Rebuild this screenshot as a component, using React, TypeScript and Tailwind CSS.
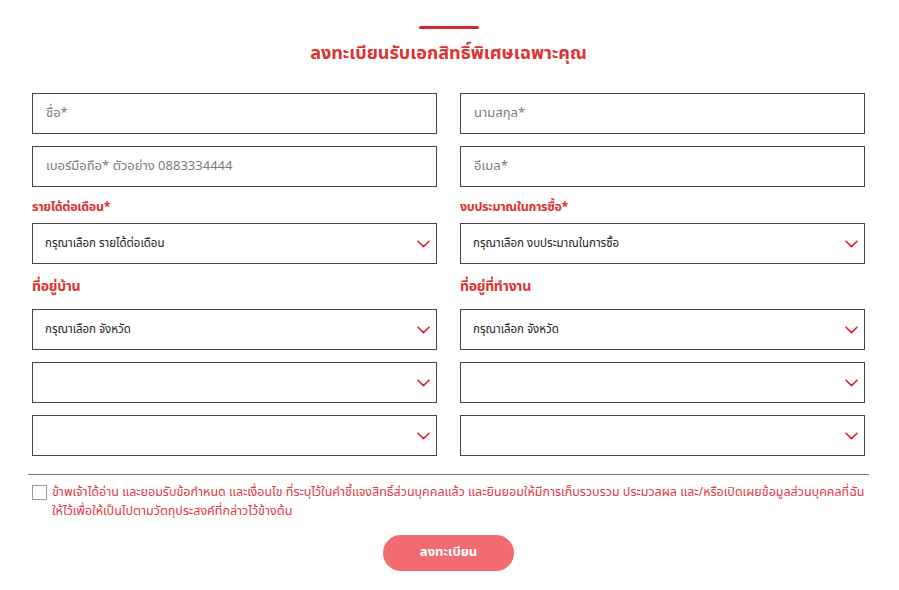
const font = { fontFamily: '"Noto Sans Thai", "Noto Sans", "Liberation Sans", sans-serif' };

function Chevron() {
  return (
    <svg width="13" height="8" viewBox="0 0 13 8" fill="none" className="shrink-0">
      <path d="M1 1.2 L6.5 6.6 L12 1.2" stroke="#d9232d" strokeWidth="1.6" strokeLinecap="round" strokeLinejoin="round" />
    </svg>
  );
}

function TextInput({ placeholder }: { placeholder: string }) {
  return (
    <div className="flex h-[41px] items-center border border-[#444] bg-white px-[13px]">
      <span className="text-[13px] text-[#7a7a7a]">{placeholder}</span>
    </div>
  );
}

function SelectBox({ value }: { value?: string }) {
  return (
    <div className="flex h-[41px] items-center justify-between border border-[#444] bg-white pl-[12px] pr-[6px]">
      <span className="text-[11.5px] text-[#222]">{value ?? ""}</span>
      <Chevron />
    </div>
  );
}

function SmallLabel({ children }: { children: React.ReactNode }) {
  return (
    <div className="mb-[7px] mt-[13px] text-[12.5px] font-bold leading-[16px] tracking-[-0.3px] text-[#e0302f]">
      {children}
    </div>
  );
}

function BigLabel({ children }: { children: React.ReactNode }) {
  return (
    <div className="mb-[12px] mt-[13px] text-[14px] font-bold leading-[20px] tracking-[-0.3px] text-[#e0302f]">
      {children}
    </div>
  );
}

export default function App() {
  return (
    <div className="min-h-[590px] w-full bg-white" style={font}>
      <div className="ml-[32px] w-[833px] pt-[26px]">
        <div className="flex flex-col items-center">
          <div className="h-[3px] w-[60px] rounded-full bg-[#d9232d]" />
          <h1 className="mt-[12px] text-[18px] font-bold leading-[26px] text-[#e0302f]">
            ลงทะเบียนรับเอกสิทธิ์พิเศษเฉพาะคุณ
          </h1>
        </div>

        <div className="mt-[26px] grid grid-cols-2 gap-x-[23px]">
          <div className="flex flex-col">
            <TextInput placeholder="ชื่อ*" />
            <div className="mt-[12px]">
              <TextInput placeholder="เบอร์มือถือ* ตัวอย่าง 0883334444" />
            </div>
            <SmallLabel>รายได้ต่อเดือน*</SmallLabel>
            <SelectBox value="กรุณาเลือก รายได้ต่อเดือน" />
            <BigLabel>ที่อยู่บ้าน</BigLabel>
            <SelectBox value="กรุณาเลือก จังหวัด" />
            <div className="mt-[12px]">
              <SelectBox />
            </div>
            <div className="mt-[12px]">
              <SelectBox />
            </div>
          </div>
          <div className="flex flex-col">
            <TextInput placeholder="นามสกุล*" />
            <div className="mt-[12px]">
              <TextInput placeholder="อีเมล*" />
            </div>
            <SmallLabel>งบประมาณในการซื้อ*</SmallLabel>
            <SelectBox value="กรุณาเลือก งบประมาณในการซื้อ" />
            <BigLabel>ที่อยู่ที่ทำงาน</BigLabel>
            <SelectBox value="กรุณาเลือก จังหวัด" />
            <div className="mt-[12px]">
              <SelectBox />
            </div>
            <div className="mt-[12px]">
              <SelectBox />
            </div>
          </div>
        </div>

        <div className="-mx-[4px] mt-[18px] h-px bg-[#777]" />

        <div className="mt-[8px] flex items-start gap-[5px]">
          <div className="mt-[2px] h-[15px] w-[15px] shrink-0 border border-[#999] bg-white" />
          <p className="text-[12.5px] leading-[19px] text-[#e3383f]">
            ข้าพเจ้าได้อ่าน และยอมรับข้อกำหนด และเงื่อนไข ที่ระบุไว้ในคำชี้แจงสิทธิ์ส่วนบุคคลแล้ว และยินยอมให้มีการเก็บรวบรวม ประมวลผล และ/หรือเปิดเผยข้อมูลส่วนบุคคลที่ฉันให้ไว้เพื่อให้เป็นไปตามวัตถุประสงค์ที่กล่าวไว้ข้างต้น
          </p>
        </div>

        <div className="mt-[14px] flex justify-center">
          <button className="h-[36px] w-[131px] rounded-full bg-[#f26b70] text-[13px] font-bold text-white">
            ลงทะเบียน
          </button>
        </div>
      </div>
    </div>
  );
}
